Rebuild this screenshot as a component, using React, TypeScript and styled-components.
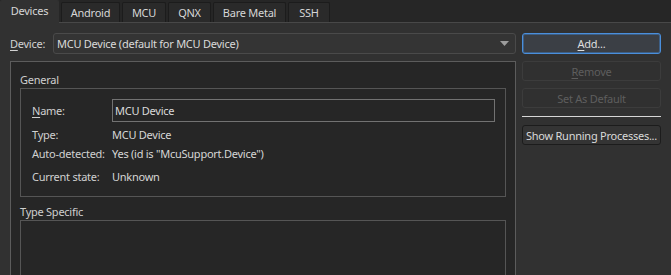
import React from "react";
import styled, { createGlobalStyle } from "styled-components";

const Global = createGlobalStyle`
  html, body { margin: 0; padding: 0; background: #262626; }
  body { font-family: "Noto Sans", "Open Sans", sans-serif; font-size: 11px; letter-spacing: -0.25px; color: #d2d2d2; }
  * { box-sizing: border-box; }
`;

const Window = styled.div`
  width: 671px;
  height: 275px;
  overflow: hidden;
  display: flex;
  flex-direction: column;
  background: #262626;
`;

const TabBar = styled.div`
  height: 22px;
  display: flex;
  align-items: flex-end;
  gap: 2px;
  flex: none;
`;

const Tab = styled.div<{ $w: number; $active?: boolean }>`
  width: ${(p) => p.$w}px;
  height: ${(p) => (p.$active ? 23 : 20)}px;
  margin-bottom: ${(p) => (p.$active ? -1 : 0)}px;
  position: relative;
  z-index: ${(p) => (p.$active ? 2 : 1)};
  display: flex;
  align-items: center;
  justify-content: center;
  padding-bottom: ${(p) => (p.$active ? 3 : 0)}px;
  background: ${(p) => (p.$active ? "#313131" : "#2a2a2a")};
  border: 1px solid ${(p) => (p.$active ? "#313131" : "#1c1c1c")};
  border-bottom: none;
  border-radius: 2px 2px 0 0;
  color: #d6d6d6;
  white-space: nowrap;
`;

const Pane = styled.div`
  flex: 1;
  background: #313131;
  border-top: 1px solid #484848;
  display: grid;
  grid-template-columns: 516px 1fr;
  min-height: 0;
`;

const LeftCol = styled.div`
  display: flex;
  flex-direction: column;
  padding-top: 10px;
  min-height: 0;
`;

const DeviceRow = styled.div`
  display: flex;
  align-items: center;
  height: 21px;
  padding-left: 10px;
`;

const RowLabel = styled.span`
  width: 43px;
  flex: none;
`;

const U = styled.span`
  text-decoration: underline;
  text-underline-offset: 2px;
`;

const Combo = styled.div`
  flex: 1;
  height: 21px;
  background: #343434;
  border: 1px solid #4a4a4a;
  border-radius: 3px;
  display: flex;
  align-items: center;
  padding-left: 3px;
  padding-right: 6px;
  color: #dadada;
`;

const ComboText = styled.span`
  flex: 1;
`;

const Frame = styled.div`
  margin-top: 7px;
  margin-left: 10px;
  flex: 1;
  background: #262626;
  border: 1px solid #5c5c5c;
  border-bottom: none;
  padding: 0 9px 0 9px;
  display: flex;
  flex-direction: column;
  min-height: 0;
`;

const GroupTitle = styled.div<{ $top: number }>`
  margin-top: ${(p) => p.$top}px;
  height: 16px;
  line-height: 16px;
  color: #cfcfcf;
`;

const GroupBox = styled.div`
  border: 1px solid #555555;
  padding: 10px 10px 11px 11px;
  display: grid;
  grid-template-columns: 80px 1fr;
  align-items: center;
  row-gap: 3px;
`;

const EmptyGroup = styled.div`
  border: 1px solid #555555;
  border-bottom: none;
  flex: 1;
  min-height: 60px;
`;

const FormLabel = styled.div<{ $extra?: number }>`
  height: 16px;
  line-height: 16px;
  margin-top: ${(p) => p.$extra ?? 0}px;
  color: #d0d0d0;
  white-space: nowrap;
`;

const FormValue = styled(FormLabel)`
  color: #d6d6d6;
`;

const NameInput = styled.div`
  height: 23px;
  border: 1px solid #727272;
  background: #262626;
  display: flex;
  align-items: center;
  padding-left: 2px;
  margin-bottom: 2px;
  color: #dadada;
`;

const RightCol = styled.div`
  padding: 10px 10px 0 6px;
  display: flex;
  flex-direction: column;
  width: 155px;
`;

const Button = styled.div<{ $variant?: "focus" | "disabled" | "normal"; $h?: number; $align?: string }>`
  height: ${(p) => p.$h ?? 20}px;
  width: 139px;
  border-radius: 3px;
  display: flex;
  align-items: center;
  justify-content: ${(p) => p.$align ?? "center"};
  padding-left: ${(p) => (p.$align ? 3 : 0)}px;
  white-space: nowrap;
  overflow: hidden;
  margin-bottom: 7px;
  ${(p) =>
    p.$variant === "focus"
      ? `background: #3b3f45; border: 1px solid #4a8fdc; color: #dedede; box-shadow: inset 0 0 0 1px #3d5f86;`
      : p.$variant === "disabled"
      ? `background: #303030; border: 1px solid #3c3c3c; color: #5e5e5e;`
      : `background: #343434; border: 1px solid #1c1c1c; color: #dadada;`}
`;

const Separator = styled.div`
  height: 1px;
  width: 139px;
  background: #d6d6d6;
  margin: 1px 0 8px 0;
`;

const Arrow = () => (
  <svg width="9" height="5" viewBox="0 0 9 5">
    <path d="M0 0 H9 L4.5 5 Z" fill="#9c9c9c" />
  </svg>
);

const tabs: [string, number][] = [
  ["Devices", 59],
  ["Android", 59],
  ["MCU", 44],
  ["QNX", 43],
  ["Bare Metal", 73],
  ["SSH", 42],
];

export default function App() {
  return (
    <Window>
      <Global />
      <TabBar>
        {tabs.map(([t, w], i) => (
          <Tab key={t} $w={w} $active={i === 0}>
            {t}
          </Tab>
        ))}
      </TabBar>
      <Pane>
        <LeftCol>
          <DeviceRow>
            <RowLabel>
              <U>D</U>evice:
            </RowLabel>
            <Combo>
              <ComboText>MCU Device (default for MCU Device)</ComboText>
              <Arrow />
            </Combo>
          </DeviceRow>
          <Frame>
            <GroupTitle $top={10}>General</GroupTitle>
            <GroupBox>
              <FormLabel style={{ marginBottom: 2 }}>
                <U>N</U>ame:
              </FormLabel>
              <NameInput>MCU Device</NameInput>
              <FormLabel>Type:</FormLabel>
              <FormValue>MCU Device</FormValue>
              <FormLabel>Auto-detected:</FormLabel>
              <FormValue>Yes (id is "McuSupport.Device")</FormValue>
              <FormLabel $extra={4}>Current state:</FormLabel>
              <FormValue $extra={4}>Unknown</FormValue>
            </GroupBox>
            <GroupTitle $top={7}>Type Specific</GroupTitle>
            <EmptyGroup />
          </Frame>
        </LeftCol>
        <RightCol>
          <Button $variant="focus" $h={21}>
            <U>A</U>dd...
          </Button>
          <Button $variant="disabled">
            <U>R</U>emove
          </Button>
          <Button $variant="disabled">Set As Default</Button>
          <Separator />
          <Button $variant="normal" $align="flex-start">
            Show Running Processes...
          </Button>
        </RightCol>
      </Pane>
    </Window>
  );
}
